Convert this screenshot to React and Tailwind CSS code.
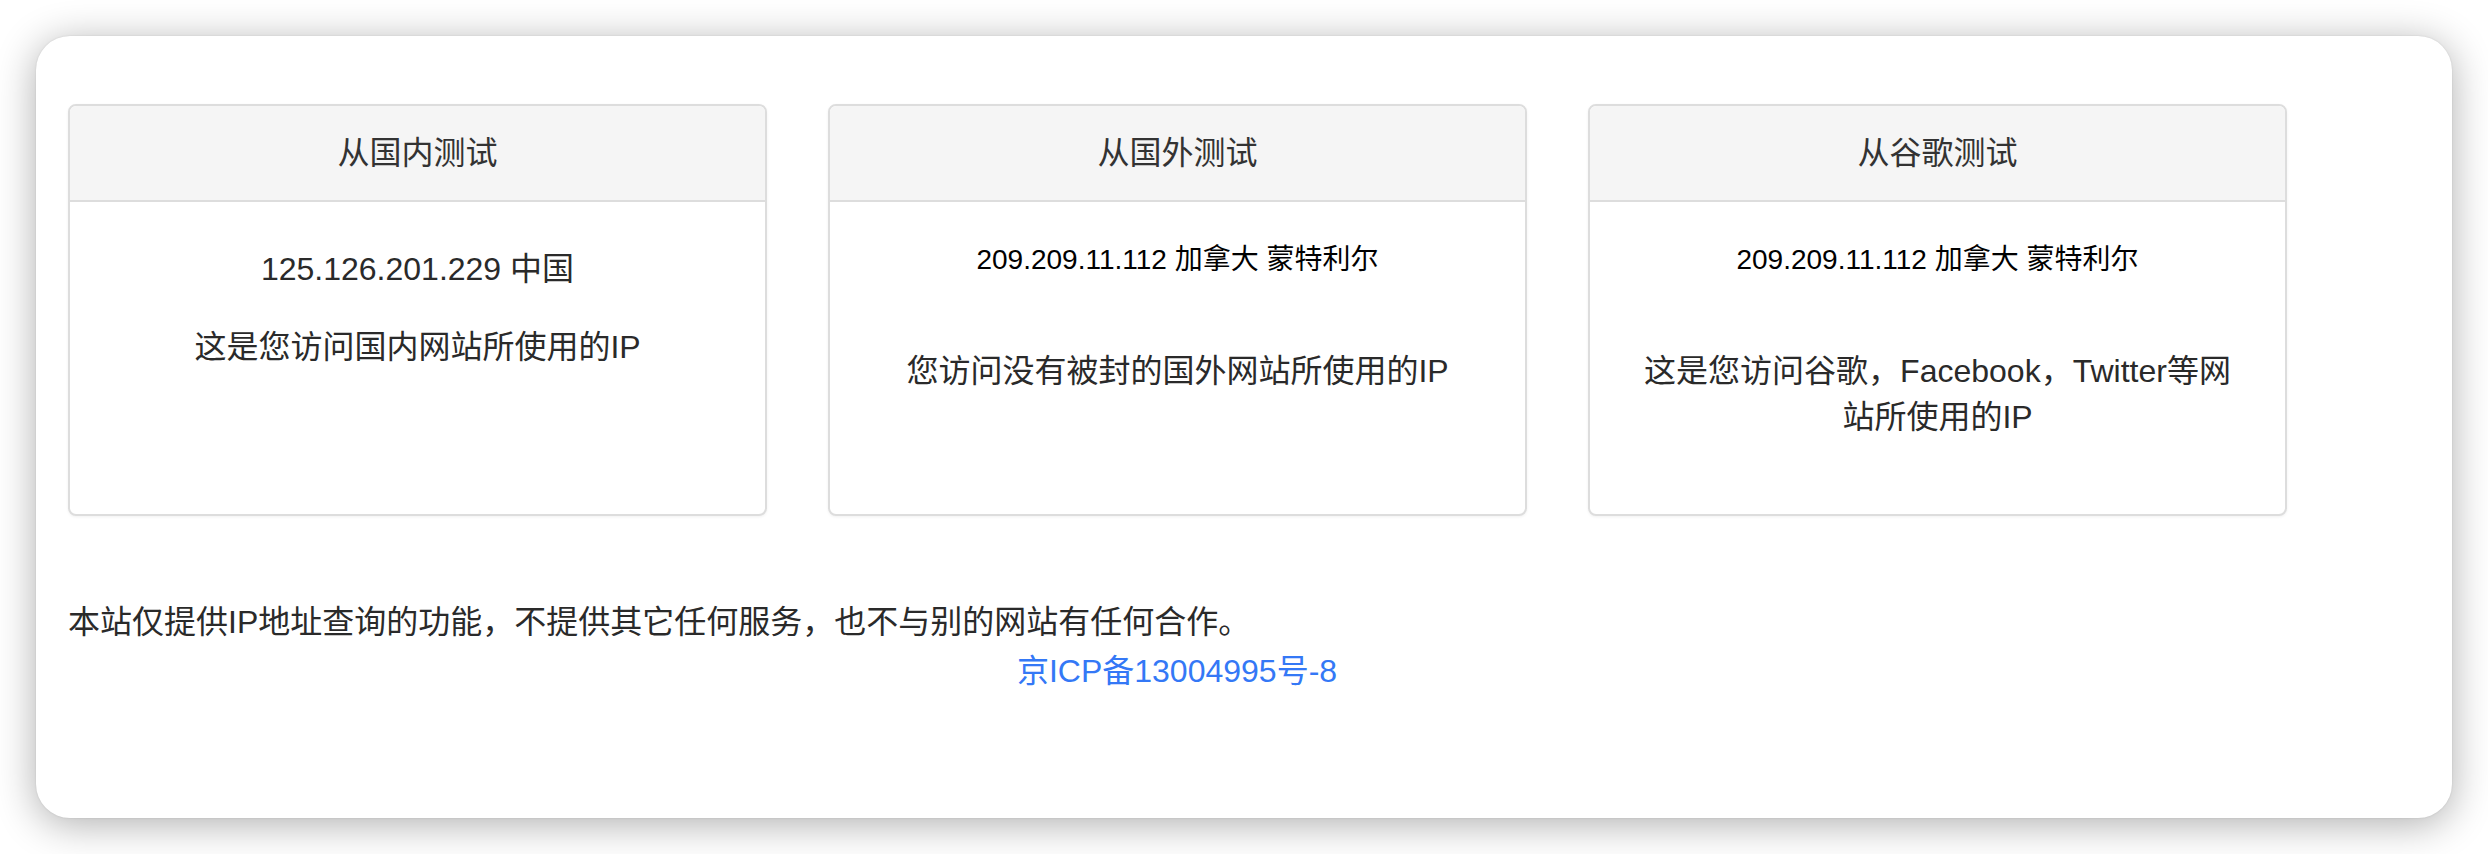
import React from "react";

const font = "font-['Liberation_Sans','Noto_Sans_CJK_SC',sans-serif]";

function Panel({ title, children }) {
  return (
    <div className="w-[699px] h-[412px] shrink-0 border-2 border-[#dddddd] rounded-[8px] bg-white overflow-hidden shadow-[0_1px_3px_rgba(0,0,0,0.06)] flex flex-col">
      <div className="h-[96px] shrink-0 bg-[#f5f5f5] border-b-2 border-[#dddddd] flex items-center justify-center text-[32px] text-[#333333]">
        {title}
      </div>
      <div className="flex-1 text-center">{children}</div>
    </div>
  );
}

export default function App() {
  return (
    <div className={`w-[2488px] h-[854px] bg-white pt-[36px] pl-[36px] ${font}`}>
      <div className="w-[2416px] h-[782px] rounded-[34px] bg-white shadow-[0_6px_40px_rgba(0,0,0,0.32),0_0_2px_rgba(0,0,0,0.12)] pt-[68px] pl-[32px]">
        <div className="w-[2218px]">
          {/* three test panels */}
          <div className="flex gap-[61px]">
            <Panel title="从国内测试">
              <p className="pt-[43px] text-[32px] leading-[48px] text-[#2a2a2a]">125.126.201.229 中国</p>
              <p className="mt-[30px] text-[32px] leading-[48px] text-[#2a2a2a]">这是您访问国内网站所使用的IP</p>
            </Panel>
            <Panel title="从国外测试">
              <p className="pt-[38px] text-[28px] leading-[40px] text-black">209.209.11.112 加拿大 蒙特利尔</p>
              <p className="mt-[68px] text-[32px] leading-[46px] text-[#2a2a2a]">您访问没有被封的国外网站所使用的IP</p>
            </Panel>
            <Panel title="从谷歌测试">
              <p className="pt-[38px] text-[28px] leading-[40px] text-black">209.209.11.112 加拿大 蒙特利尔</p>
              <p className="mt-[68px] text-[32px] leading-[46px] text-[#2a2a2a]">
                这是您访问谷歌，Facebook，Twitter等网
                <br />
                站所使用的IP
              </p>
            </Panel>
          </div>

          {/* footer note */}
          <div className="mt-[83px] text-[32px] leading-[46px] text-[#2a2a2a]">
            <p>本站仅提供IP地址查询的功能，不提供其它任何服务，也不与别的网站有任何合作。</p>
            <p className="text-center pt-[3px]">
              <a href="#" className="text-[#3478f6]">京ICP备13004995号-8</a>
            </p>
          </div>
        </div>
      </div>
    </div>
  );
}
